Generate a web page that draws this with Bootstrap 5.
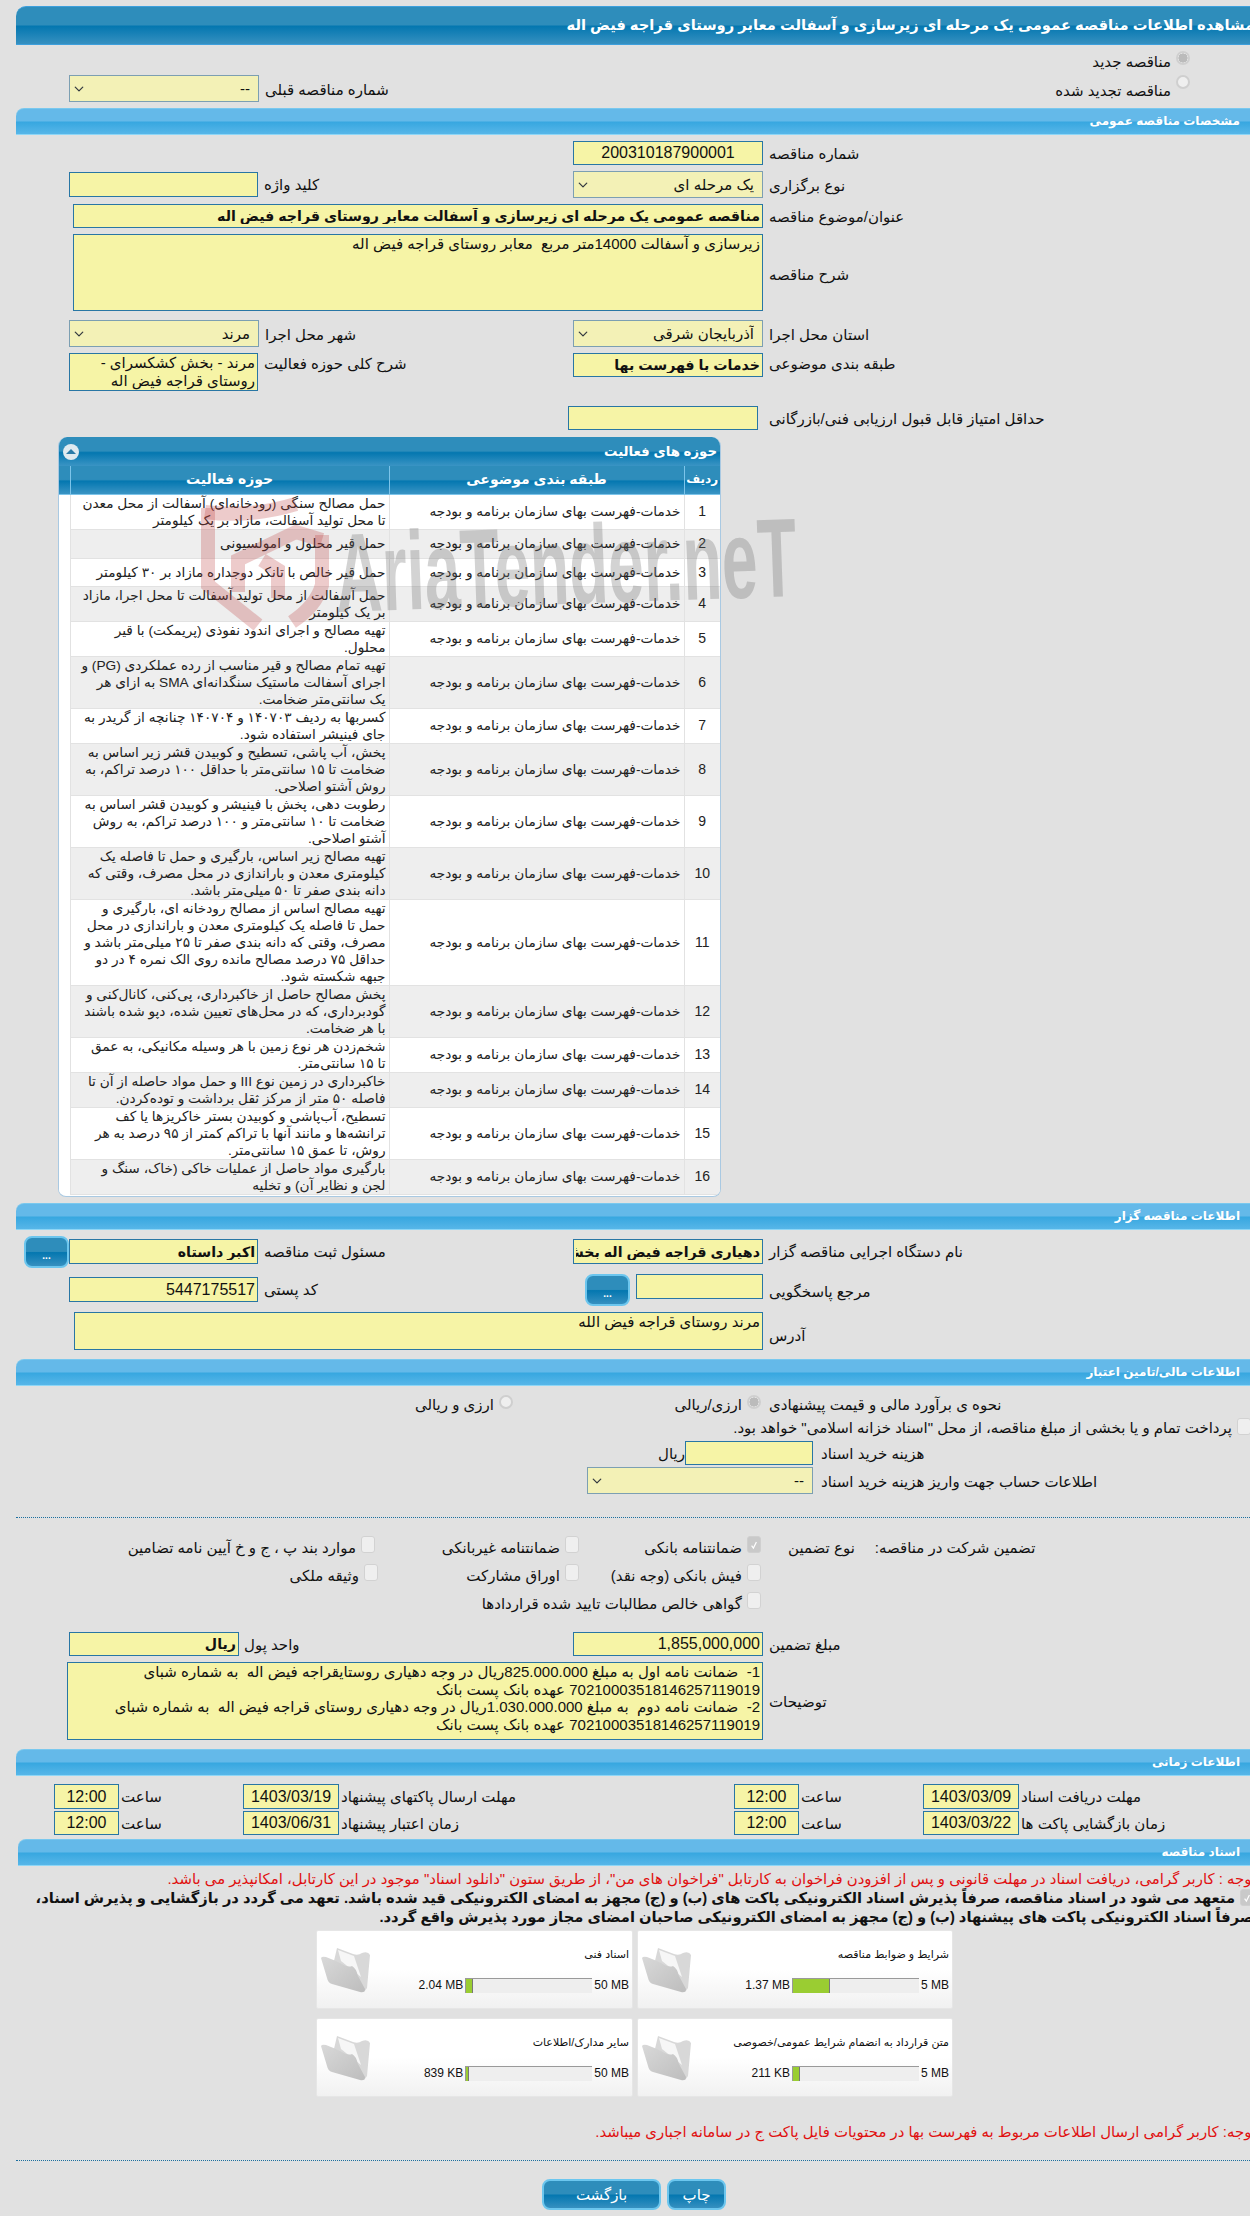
<!DOCTYPE html>
<html lang="fa">
<head>
<meta charset="utf-8">
<link href="https://cdn.jsdelivr.net/npm/bootstrap@5.3.0/dist/css/bootstrap.min.css" rel="stylesheet">
<style>
html,body{background:#e1e1e1;margin:0;overflow-x:hidden}
body{font-family:"Liberation Sans","DejaVu Sans",sans-serif;font-size:15px;line-height:17px;color:#111;direction:rtl}
.sheet{position:relative;width:1250px;height:2216px;overflow:hidden;padding-top:6px}
.sheet-title{margin-left:16px;height:39px;border-radius:10px 0 0 0;border-top:1px solid #3d9fdc;border-bottom:1px solid #3d9fdc;background:linear-gradient(#2e8dbb 0,#2e8dbb 48%,#0477b0 52%,#3690c0 100%);color:#fff;font-weight:700;font-size:14.7px;line-height:36px;white-space:nowrap;display:flex;justify-content:flex-start;margin-right:-4px;overflow:visible}
.sect{margin-left:16px;height:27px;border-radius:8px 0 0 0;background:linear-gradient(#64b9e9 0,#64b9e9 48%,#37a7e0 52%,#57b6e8 100%);border-bottom:1px solid #8ed6f6;border-top:1px solid #79c8ee;color:#fff;font-weight:700;font-size:12px;line-height:25px;padding-right:10px}
.sect.alt{margin-left:18px}
.frow{display:flex;direction:ltr;align-items:flex-start}
.frow>*,.pairL>*,.pairR>*{direction:rtl}
.pairL{display:flex;width:504px;gap:6px;align-items:flex-start;flex:none;direction:ltr}
.pairR{display:flex;gap:6px;align-items:flex-start;direction:ltr}
.pl69{padding-left:69px}
.lab{white-space:nowrap;line-height:17px}
.fld{display:block;flex:none;border:1px solid #2876a4;border-radius:0;background:#f6f4a6;padding:0 2px;font:inherit;color:#111;height:24px;line-height:22px;min-height:0;direction:rtl;overflow:hidden;white-space:nowrap}
.fld:focus{background:#f6f4a6;box-shadow:none;border-color:#2876a4}
.fld.bold{font-weight:700;font-size:14.2px}
.fld.big{font-size:16px}
.fld.ta{white-space:pre-wrap;line-height:17.6px}
.form-select.fsel,.form-select.fsel:disabled{flex:none;height:27px;min-height:0;border:1px solid #7c9fb2;border-radius:0;background-color:#f3f1b6;padding:0 8px 0 20px;font:inherit;color:#111;direction:rtl;background-position:left 4px center;background-size:10px 10px}
.w190{width:190px}.w189{width:189px}.w170{width:170px}.w127{width:127px}.w128{width:128px}.w226{width:226px}.w690{width:690px}.w96{width:96px}.w65{width:65px}
.h25{height:25px}.h38{height:38px}.h77{height:77px}
.mt3{margin-top:3px}.mt1{margin-top:1px}.mt2{margin-top:2px}.mt4{margin-top:4px}.mt6{margin-top:6px}.mt7{margin-top:7px}.mt9{margin-top:9px}.mt15{margin-top:15px}.mt18{margin-top:18px}.mt23{margin-top:23px}.mt5{margin-top:5px}.mt8{margin-top:8px}.mt20{margin-top:20px}.mt26{margin-top:26px}
.rad{width:14px;height:14px;margin:0;flex:none;background-color:#efefef;border:2px solid #cfcfcf;opacity:1!important;float:none}
.rad:checked{background-color:#efefef;border-color:#cfcfcf;background-image:radial-gradient(circle,#bbb 0,#bbb 62%,transparent 68%);background-size:100% 100%}
.chk{width:14px;height:17px;margin:0;flex:none;background-color:#efefef;border:1px solid #d2d2d2;border-radius:3px!important;opacity:1!important;float:none}
.chk:checked{background-color:#c9c9c9;border-color:#cfcfcf;background-image:url("data:image/svg+xml,%3csvg xmlns='http://www.w3.org/2000/svg' viewBox='0 0 20 20'%3e%3cpath fill='none' stroke='%23fff' stroke-width='2' d='M6 11l3 4 5-10'/%3e%3c/svg%3e")}
.panel{margin-left:0;margin-right:529px;width:663px;height:760px;margin-top:7px;background:#fff;border:1px solid #a9c9e2;border-top:0;border-radius:9px 9px 8px 8px;overflow:hidden}
.panel-top{height:29px;background:linear-gradient(#2e8dbb 0,#2e8dbb 48%,#0477b0 54%,#3a94c4 100%);color:#fff;font-weight:700;font-size:13.3px;line-height:29px;display:flex;justify-content:space-between;align-items:center;padding:0 3px 0 4px;direction:rtl}
.dot{width:16px;height:16px;border-radius:50%;background:#dfeaf0;display:flex;align-items:center;justify-content:center}
.tri{width:0;height:0;border-left:5px solid transparent;border-right:5px solid transparent;border-bottom:5px solid #2b7ba8}
.tbl{table-layout:fixed;width:662px;margin:0;direction:rtl;border-collapse:collapse;--bs-table-bg:transparent}
.tbl th{height:28px;padding:0;background:linear-gradient(#2e8dbb 0,#2e8dbb 48%,#0477b0 54%,#3a94c4 100%);color:#fff;font-size:14px;font-weight:700;text-align:center;border:0;border-left:1px solid #7cc4ea;vertical-align:middle;border-bottom:1px solid #7cc4ea}
.tbl th:first-child{font-size:12px}
.tbl th:last-child{border-left:0}
.tbl td{padding:0 3px;border:0;border-bottom:1px solid #e2e2e2;border-left:1px solid #e2e2e2;line-height:17px;vertical-align:middle;font-size:13.7px;white-space:nowrap;color:#222;background:transparent;box-shadow:none}
.tbl td:last-child{border-left:0;border-bottom:0;padding:0;background:#fff}
.tbl tr:nth-child(even) td:not(:last-child){background:#eee}
.tbl td.rn{text-align:center;font-size:14px}
.tbl tr.one td{height:29px}
.tbl tr.one2 td{height:28px}
.dots{border:0;border-top:1px dotted #1c6f9f;margin-left:16px;margin-right:0;margin-bottom:0;opacity:1}
.btn-blue{flex:none;border:2px solid #6cc6ee;border-radius:8px;background:linear-gradient(#2e8dbb 0,#2e8dbb 48%,#0477b0 52%,#3690c0 100%);color:#fff;padding:0;font:inherit;line-height:1}
.btn-blue:hover{background:linear-gradient(#2e8dbb 0,#2e8dbb 48%,#0477b0 52%,#3690c0 100%);color:#fff;border-color:#6cc6ee}
.b45{width:45px;height:32px;font-weight:700;font-size:10px;padding-top:8px}
.sp8{margin-left:8px}
.opt{display:flex;gap:5px;align-items:flex-start;flex:none;white-space:nowrap;direction:rtl}
.optA{width:513px}.optB{width:248px}
.gA{width:375px}.gB{width:204px}.gC{width:182px}
.nudge{margin-right:-3px}
.pl662{padding-left:662px}.pl587{padding-left:587px}
.dateA{width:189px}.dateB{width:491px}
.pl54{padding-left:54px}
.sub{display:flex;gap:2px;direction:ltr;flex:none;align-items:flex-start}
.note-red{color:#e01010;font-size:14.9px;line-height:19px;height:19px;white-space:nowrap;text-align:right;margin-right:-6px}
.note-bold{font-weight:700;font-size:14.7px;line-height:19px;height:38px;white-space:nowrap;color:#111;margin-right:-4px}
.cards{display:grid;grid-template-columns:317px 316px;gap:9px 4px;margin-left:0;margin-right:297px;width:637px;direction:ltr}
.fcard{height:79px;display:flex;direction:ltr;background:linear-gradient(#fff 0,#fff 50%,#f1f1f1 100%);border:1px solid #e6e6e6;border-radius:2px;padding:17px 3px 0 3px}
.fcard>svg{flex:none}
.fbody{flex:1;direction:rtl;margin-top:-2px}
.ftitle{font-size:11px;line-height:17px;white-space:nowrap}
.frow2{display:flex;direction:ltr;justify-content:flex-end;gap:2px;margin-top:15px;font-size:12px;line-height:15px;white-space:nowrap}
.frow2 span{direction:ltr}
.fbar{width:127px;height:15px;background:#eee;border-top:1px solid #999;border-left:1px solid #999;flex:none;display:flex}
.fill{background:#9acd32;border-right:1px solid #777;height:100%}
.btns{display:flex;gap:6px;margin-left:542px;margin-top:18px;direction:ltr}
.btn-act{height:31px;font-size:15px}
.wa{width:119px}.wb{width:59px}
.wm{position:absolute;left:190px;top:495px;pointer-events:none;direction:ltr}
.wmt{font-family:"Liberation Sans",sans-serif;font-size:112px;font-weight:700;fill:rgba(110,110,110,.3)}
</style>
</head>
<body>
<div class="sheet">
  <div class="sheet-title"><span>مشاهده اطلاعات مناقصه عمومی یک مرحله ای زیرسازی و آسفالت معابر روستای قراجه فیض اله</span></div>

  <div class="frow mt6"><div class="opt" style="margin-left:1070px;width:120px"><input class="form-check-input rad" type="radio" checked disabled><span class="mt2">مناقصه جدید</span></div></div>
  <div class="frow pl69 mt5">
    <div class="pairL"><select class="form-select fsel w190" disabled><option>--</option></select><span class="lab mt6">شماره مناقصه قبلی</span></div>
    <div class="opt" style="margin-left:487px;width:130px"><input class="form-check-input rad mt4" type="radio" disabled><span class="mt7">مناقصه تجدید شده</span></div>
  </div>

  <div class="sect mt6">مشخصات مناقصه عمومی</div>

  <div class="frow pl69 mt6"><div class="pairL"></div><div class="pairR"><input class="fld w190 big text-center" value="200310187900001"><span class="lab mt4">شماره مناقصه</span></div></div>
  <div class="frow pl69 mt6">
    <div class="pairL mt1"><input class="fld w189 h25"><span class="lab mt4">کلید واژه</span></div>
    <div class="pairR"><select class="form-select fsel w190" disabled><option>یک مرحله ای</option></select><span class="lab mt6">نوع برگزاری</span></div>
  </div>
  <div class="frow mt6" style="padding-left:73px"><div class="pairR"><input class="fld w690 bold" value="مناقصه عمومی یک مرحله ای زیرسازی و آسفالت معابر روستای قراجه فیض اله"><span class="lab mt4">عنوان/موضوع مناقصه</span></div></div>
  <div class="frow mt6" style="padding-left:73px"><div class="pairR align-items-center"><div class="fld ta w690 h77">زیرسازی و آسفالت 14000متر مربع  معابر روستای قراجه فیض اله</div><span class="lab mt3">شرح مناقصه</span></div></div>
  <div class="frow pl69 mt9">
    <div class="pairL"><select class="form-select fsel w190" disabled><option>مرند</option></select><span class="lab mt6">شهر محل اجرا</span></div>
    <div class="pairR"><select class="form-select fsel w190" disabled><option>آذربایجان شرقی</option></select><span class="lab mt6">استان محل اجرا</span></div>
  </div>
  <div class="frow pl69 mt6">
    <div class="pairL"><div class="fld ta w189 h38">مرند - بخش کشکسرای -<br>روستای قراجه فیض اله</div><span class="lab mt2">شرح کلی حوزه فعالیت</span></div>
    <div class="pairR"><input class="fld w190 bold" value="خدمات با فهرست بها"><span class="lab mt2">طبقه بندی موضوعی</span></div>
  </div>
  <div class="frow mt15" style="padding-left:568px"><div class="pairR" style="gap:11px"><input class="fld w190"><span class="lab mt4">حداقل امتیاز قابل قبول ارزیابی فنی/بازرگانی</span></div></div>

  <div class="panel">
    <div class="panel-top"><span>حوزه های فعالیت</span><span class="dot"><span class="tri"></span></span></div>
    <table class="table tbl">
      <colgroup><col style="width:36px"><col style="width:295px"><col style="width:319px"><col style="width:12px"></colgroup>
      <thead><tr><th>ردیف</th><th>طبقه بندی موضوعی</th><th>حوزه فعالیت</th><th></th></tr></thead>
      <tbody>
<tr><td class="rn">1</td><td>خدمات-فهرست بهای سازمان برنامه و بودجه</td><td>حمل مصالح سنگی (رودخانه‌ای) آسفالت از محل معدن<br>تا محل تولید آسفالت، مازاد بر یک کیلومتر</td><td></td></tr>
<tr class="one"><td class="rn">2</td><td>خدمات-فهرست بهای سازمان برنامه و بودجه</td><td>حمل قیر محلول و امولسیونی</td><td></td></tr>
<tr class="one2"><td class="rn">3</td><td>خدمات-فهرست بهای سازمان برنامه و بودجه</td><td>حمل قیر خالص با تانکر دوجداره مازاد بر ۳۰ کیلومتر</td><td></td></tr>
<tr><td class="rn">4</td><td>خدمات-فهرست بهای سازمان برنامه و بودجه</td><td>حمل آسفالت از محل تولید آسفالت تا محل اجرا، مازاد<br>بر یک کیلومتر</td><td></td></tr>
<tr><td class="rn">5</td><td>خدمات-فهرست بهای سازمان برنامه و بودجه</td><td>تهیه مصالح و اجرای اندود نفوذی (پریمکت) با قیر<br>محلول.</td><td></td></tr>
<tr><td class="rn">6</td><td>خدمات-فهرست بهای سازمان برنامه و بودجه</td><td>تهیه تمام مصالح و قیر مناسب از رده عملکردی (PG) و<br>اجرای آسفالت ماستیک سنگدانه‌ای SMA به ازای هر<br>یک سانتی‌متر ضخامت.</td><td></td></tr>
<tr><td class="rn">7</td><td>خدمات-فهرست بهای سازمان برنامه و بودجه</td><td>کسربها به ردیف ۱۴۰۷۰۳ و ۱۴۰۷۰۴ چنانچه از گریدر به<br>جای فینیشر استفاده شود.</td><td></td></tr>
<tr><td class="rn">8</td><td>خدمات-فهرست بهای سازمان برنامه و بودجه</td><td>پخش، آب پاشی، تسطیح و کوبیدن قشر زیر اساس به<br>ضخامت تا ۱۵ سانتی‌متر با حداقل ۱۰۰ درصد تراکم، به<br>روش آشتو اصلاحی.</td><td></td></tr>
<tr><td class="rn">9</td><td>خدمات-فهرست بهای سازمان برنامه و بودجه</td><td>رطوبت دهی، پخش با فینیشر و کوبیدن قشر اساس به<br>ضخامت تا ۱۰ سانتی‌متر و ۱۰۰ درصد تراکم، به روش<br>آشتو اصلاحی.</td><td></td></tr>
<tr><td class="rn">10</td><td>خدمات-فهرست بهای سازمان برنامه و بودجه</td><td>تهیه مصالح زیر اساس، بارگیری و حمل تا فاصله یک<br>کیلومتری معدن و باراندازی در محل مصرف، وقتی که<br>دانه بندی صفر تا ۵۰ میلی‌متر باشد.</td><td></td></tr>
<tr><td class="rn">11</td><td>خدمات-فهرست بهای سازمان برنامه و بودجه</td><td>تهیه مصالح اساس از مصالح رودخانه ای، بارگیری و<br>حمل تا فاصله یک کیلومتری معدن و باراندازی در محل<br>مصرف، وقتی که دانه بندی صفر تا ۲۵ میلی‌متر باشد و<br>حداقل ۷۵ درصد مصالح مانده روی الک نمره ۴ در دو<br>جبهه  شکسته شود.</td><td></td></tr>
<tr><td class="rn">12</td><td>خدمات-فهرست بهای سازمان برنامه و بودجه</td><td>پخش مصالح حاصل از خاکبرداری، پی‌کنی، کانال‌کنی و<br>گودبرداری، که در محل‌های تعیین شده، دپو شده باشند<br>با هر ضخامت.</td><td></td></tr>
<tr><td class="rn">13</td><td>خدمات-فهرست بهای سازمان برنامه و بودجه</td><td>شخم‌زدن هر نوع زمین با هر وسیله مکانیکی، به عمق<br>تا ۱۵ سانتی‌متر.</td><td></td></tr>
<tr><td class="rn">14</td><td>خدمات-فهرست بهای سازمان برنامه و بودجه</td><td>خاکبرداری در زمین نوع III و حمل مواد حاصله از آن تا<br>فاصله ۵۰ متر از مرکز ثقل برداشت و توده‌کردن.</td><td></td></tr>
<tr><td class="rn">15</td><td>خدمات-فهرست بهای سازمان برنامه و بودجه</td><td>تسطیح، آب‌پاشی و کوبیدن بستر خاکریزها یا کف<br>ترانشه‌ها و مانند آنها با تراکم کمتر از ۹۵ درصد به هر<br>روش، تا عمق ۱۵ سانتی‌متر.</td><td></td></tr>
<tr><td class="rn">16</td><td>خدمات-فهرست بهای سازمان برنامه و بودجه</td><td>بارگیری مواد حاصل از عملیات خاکی (خاک، سنگ و<br>لجن و نظایر آن) و تخلیه</td><td></td></tr>
      </tbody>
    </table>
  </div>

  <div class="sect mt6">اطلاعات مناقصه گزار</div>
  <div class="frow mt6" style="padding-left:16px">
    <button class="btn-blue b45 sp8" type="button">...</button>
    <div class="pairL mt3"><input class="fld w189 h25 bold" value="اکبر داستاه"><span class="lab mt4">مسئول ثبت مناقصه</span></div>
    <div class="pairR mt3"><input class="fld w190 h25 bold" value="دهیاری قراجه فیض اله بخش"><span class="lab mt4">نام دستگاه اجرایی مناقصه گزار</span></div>
  </div>
  <div class="frow mt6 pl69">
    <div class="pairL mt3"><input class="fld w189 h25 big" value="5447175517"><span class="lab mt4">کد پستی</span></div>
    <div class="pairR" style="padding-left:12px"><button class="btn-blue b45" type="button">...</button><input class="fld w127 h25"><span class="lab mt9">مرجع پاسخگویی</span></div>
  </div>
  <div class="frow mt6" style="padding-left:74px"><div class="pairR align-items-center"><div class="fld ta h38" style="width:689px">مرند روستای قراجه فیض الله</div><span class="lab mt8">آدرس</span></div></div>

  <div class="sect mt9">اطلاعات مالی/تامین اعتبار</div>
  <div class="frow mt9">
    <div class="opt optA"><input class="form-check-input rad" type="radio" disabled><span class="mt1">ارزی و ریالی</span></div>
    <div class="opt optB"><input class="form-check-input rad" type="radio" checked disabled><span class="mt1">ارزی/ریالی</span></div>
    <span class="lab mt1" style="margin-left:8px">نحوه ی برآورد مالی و قیمت پیشنهادی</span>
  </div>
  <div class="opt mt5" style="margin-right:-1px"><input class="form-check-input chk" type="checkbox" disabled><span class="mt1">پرداخت تمام و یا بخشی از مبلغ مناقصه، از محل "اسناد خزانه اسلامی" خواهد بود.</span></div>
  <div class="frow pl662 mt5"><span class="lab mt4" style="width:23px">ریال</span><div class="pairR" style="gap:8px"><input class="fld w128"><span class="lab mt4">هزینه خرید اسناد</span></div></div>
  <div class="frow pl587 mt2"><div class="pairR" style="gap:8px"><select class="form-select fsel w226" disabled><option>--</option></select><span class="lab mt6">اطلاعات حساب جهت واریز هزینه خرید اسناد</span></div></div>
  <hr class="dots mt23">
  <div class="frow mt18">
    <div class="opt gA"><input class="form-check-input chk" type="checkbox" disabled><span class="mt3">موارد بند پ ، ج و خ آیین نامه تضامین</span></div>
    <div class="opt gB"><input class="form-check-input chk" type="checkbox" disabled><span class="mt3">ضمانتنامه غیربانکی</span></div>
    <div class="opt gC"><input class="form-check-input chk" type="checkbox" checked disabled><span class="mt3">ضمانتنامه بانکی</span></div>
    <span class="lab mt3" style="margin-left:27px">نوع تضمین</span>
    <span class="lab mt3" style="margin-left:20px">تضمین شرکت در مناقصه:</span>
  </div>
  <div class="frow mt8">
    <div class="opt gA"><input class="form-check-input chk nudge" type="checkbox" disabled><span class="mt3">وثیقه ملکی</span></div>
    <div class="opt gB"><input class="form-check-input chk" type="checkbox" disabled><span class="mt3">اوراق مشارکت</span></div>
    <div class="opt gC"><input class="form-check-input chk" type="checkbox" disabled><span class="mt3">فیش بانکی (وجه نقد)</span></div>
  </div>
  <div class="frow mt8">
    <div class="opt" style="width:761px"><input class="form-check-input chk" type="checkbox" disabled><span class="mt3">گواهی خالص مطالبات تایید شده قراردادها</span></div>
  </div>
  <div class="frow pl69 mt20">
    <div class="pairL" style="gap:5px"><input class="fld w170 bold" value="ریال"><span class="lab mt4">واحد پول</span></div>
    <div class="pairR"><input class="fld w190 big" value="1,855,000,000"><span class="lab mt4">مبلغ تضمین</span></div>
  </div>
  <div class="frow mt6" style="padding-left:67px"><div class="pairR align-items-center"><div class="fld ta" style="width:696px;height:78px">1-  ضمانت نامه اول به مبلغ 825.000.000ریال در وجه دهیاری روستایقراجه فیض اله  به شماره شبای<br>70210003518146257119019 عهده بانک پست بانک<br>2-  ضمانت نامه دوم  به مبلغ 1.030.000.000ریال در وجه دهیاری روستای قراجه فیض اله  به شماره شبای<br>70210003518146257119019 عهده بانک پست بانک</div><span class="lab">توضیحات</span></div></div>

  <div class="sect mt9">اطلاعات زمانی</div>
  <div class="frow pl54 mt8">
    <div class="sub dateA"><input class="fld w65 h25 big text-center" value="12:00"><span class="lab mt4">ساعت</span></div>
    <div class="sub dateB"><input class="fld w96 h25 big text-center" value="1403/03/19"><span class="lab mt4">مهلت ارسال پاکتهای پیشنهاد</span></div>
    <div class="sub dateA"><input class="fld w65 h25 big text-center" value="12:00"><span class="lab mt4">ساعت</span></div>
    <div class="sub"><input class="fld w96 h25 big text-center" value="1403/03/09"><span class="lab mt4">مهلت دریافت اسناد</span></div>
  </div>
  <div class="frow pl54 mt2">
    <div class="sub dateA"><input class="fld w65 big text-center" value="12:00"><span class="lab mt4">ساعت</span></div>
    <div class="sub dateB"><input class="fld w96 big text-center" value="1403/06/31"><span class="lab mt4">زمان اعتبار پیشنهاد</span></div>
    <div class="sub dateA"><input class="fld w65 big text-center" value="12:00"><span class="lab mt4">ساعت</span></div>
    <div class="sub"><input class="fld w96 big text-center" value="1403/03/22"><span class="lab mt4">زمان بازگشایی پاکت ها</span></div>
  </div>

  <div class="sect alt mt4">اسناد مناقصه</div>
  <div class="note-red mt4">توجه : کاربر گرامی، دریافت اسناد در مهلت قانونی و پس از افزودن فراخوان به کارتابل "فراخوان های من"، از طریق ستون "دانلود اسناد" موجود در این کارتابل، امکانپذیر می باشد.</div>
  <div class="note-bold"><div class="opt"><input class="form-check-input chk" type="checkbox" checked disabled><span>متعهد می شود در اسناد مناقصه، صرفاً پذیرش اسناد الکترونیکی پاکت های (ب) و (ج) مجهز به امضای الکترونیکی قید شده باشد. تعهد می گردد در بازگشایی و پذیرش اسناد،</span></div>صرفاً اسناد الکترونیکی پاکت های پیشنهاد (ب) و (ج) مجهز به امضای الکترونیکی صاحبان امضای مجاز مورد پذیرش واقع گردد.</div>

  <div class="cards mt3">
    <div class="fcard"><svg width="52" height="46" viewBox="0 0 52 46"><use href="#fold"/></svg><div class="fbody"><div class="ftitle">اسناد فنی</div><div class="frow2"><span>2.04 MB</span><div class="fbar"><div class="fill" style="width:7px"></div></div><span>50 MB</span></div></div></div>
    <div class="fcard"><svg width="52" height="46" viewBox="0 0 52 46"><defs><linearGradient id="fg" x1="0" y1="0" x2="1" y2="1"><stop offset="0" stop-color="#d9d9d9"/><stop offset="1" stop-color="#bdbdbd"/></linearGradient><g id="fold"><path d="M17 0L33 6Q38 8 42 5Q48 3 50 7L47 40L44 44L10 30Z" fill="#d8d8d8"/><path d="M18 2L34 8L41 29L21 13Z" fill="#f6f6f6"/><path d="M1 10Q2 8 6 9Q14 12 20 15Q28 20 32 18Q36 20 38 28L45 41Q45 45 40 44L12 36Q8 35 7 30Z" fill="url(#fg)"/></g></defs><use href="#fold"/></svg><div class="fbody"><div class="ftitle">شرایط و ضوابط مناقصه</div><div class="frow2"><span>1.37 MB</span><div class="fbar"><div class="fill" style="width:37px"></div></div><span>5 MB</span></div></div></div>
    <div class="fcard"><svg width="52" height="46" viewBox="0 0 52 46"><use href="#fold"/></svg><div class="fbody"><div class="ftitle">سایر مدارک/اطلاعات</div><div class="frow2"><span>839 KB</span><div class="fbar"><div class="fill" style="width:3px"></div></div><span>50 MB</span></div></div></div>
    <div class="fcard"><svg width="52" height="46" viewBox="0 0 52 46"><use href="#fold"/></svg><div class="fbody"><div class="ftitle">متن قرارداد به انضمام شرایط عمومی/خصوصی</div><div class="frow2"><span>211 KB</span><div class="fbar"><div class="fill" style="width:7px"></div></div><span>5 MB</span></div></div></div>
  </div>

  <div class="note-red mt26">توجه: کاربر گرامی ارسال اطلاعات مربوط به فهرست بها در محتویات فایل پاکت ج در سامانه اجباری میباشد.</div>
  <hr class="dots mt18">
  <div class="btns"><button class="btn-blue btn-act wa" type="button">بازگشت</button><button class="btn-blue btn-act wb" type="button">چاپ</button></div>

  <svg class="wm" width="620" height="140" viewBox="190 495 620 140">
    <g fill="none" stroke="rgba(190,70,70,.28)" stroke-width="14">
      <path d="M205 512Q250 518 296 504"/>
      <path d="M208 508V585L258 625"/>
      <path d="M322 535V585Q316 606 292 622"/>
      <path d="M238 592V560L296 532L322 540"/>
      <path d="M262 560L278 570V598"/>
    </g>
    <text class="wmt" x="337" y="612" textLength="461" lengthAdjust="spacingAndGlyphs" transform="rotate(-2 337 612)">AriaTender.neT</text>
  </svg>
</div>
<script src="https://cdn.jsdelivr.net/npm/bootstrap@5.3.0/dist/js/bootstrap.bundle.min.js"></script>
</body>
</html>
